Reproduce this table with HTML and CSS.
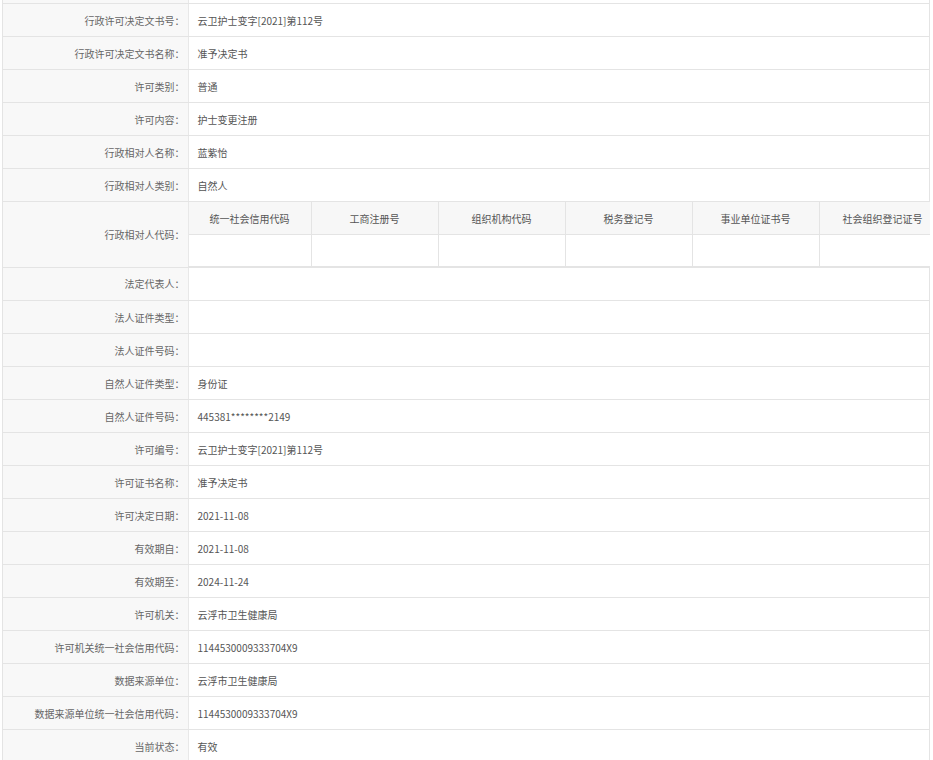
FILE: index.html
```html
<!DOCTYPE html>
<html lang="zh-CN">
<head>
<meta charset="utf-8">
<title>行政许可详情</title>
<link rel="stylesheet" href="styles.css">
</head>
<body>
<div class="wrap">
<table class="info">
<tr class="cut"><th></th><td></td></tr>
<tr><th>行政许可决定文书号：</th><td>云卫护士变字[2021]第112号</td></tr>
<tr><th>行政许可决定文书名称：</th><td>准予决定书</td></tr>
<tr><th>许可类别：</th><td>普通</td></tr>
<tr><th>许可内容：</th><td>护士变更注册</td></tr>
<tr><th>行政相对人名称：</th><td>蓝紫怡</td></tr>
<tr><th>行政相对人类别：</th><td>自然人</td></tr>
<tr class="coderow"><th>行政相对人代码：</th><td class="sub">
<div class="subclip">
<table class="codes">
<tr><th>统一社会信用代码</th><th>工商注册号</th><th>组织机构代码</th><th>税务登记号</th><th>事业单位证书号</th><th>社会组织登记证号</th></tr>
<tr><td></td><td></td><td></td><td></td><td></td><td></td></tr>
</table>
</div>
</td></tr>
<tr><th>法定代表人：</th><td></td></tr>
<tr><th>法人证件类型：</th><td></td></tr>
<tr><th>法人证件号码：</th><td></td></tr>
<tr><th>自然人证件类型：</th><td>身份证</td></tr>
<tr><th>自然人证件号码：</th><td>445381********2149</td></tr>
<tr><th>许可编号：</th><td>云卫护士变字[2021]第112号</td></tr>
<tr><th>许可证书名称：</th><td>准予决定书</td></tr>
<tr><th>许可决定日期：</th><td>2021-11-08</td></tr>
<tr><th>有效期自：</th><td>2021-11-08</td></tr>
<tr><th>有效期至：</th><td>2024-11-24</td></tr>
<tr><th>许可机关：</th><td>云浮市卫生健康局</td></tr>
<tr><th>许可机关统一社会信用代码：</th><td>1144530009333704X9</td></tr>
<tr><th>数据来源单位：</th><td>云浮市卫生健康局</td></tr>
<tr><th>数据来源单位统一社会信用代码：</th><td>1144530009333704X9</td></tr>
<tr><th>当前状态：</th><td>有效</td></tr>
</table>
</div>
</body>
</html>
```
FILE: styles.css
```css
html, body {
  margin: 0;
  padding: 0;
  background: #fff;
  overflow: hidden;
}
body {
  font-family: "Noto Sans CJK SC", "Liberation Sans", sans-serif;
  font-size: 10px;
  color: #555;
}
.wrap {
  margin-left: 2px;
  width: 928px;
  border-left: 1px solid #e4e4e4;
  border-right: 1px solid #e4e4e4;
  box-sizing: border-box;
}
.info {
  width: 100%;
  border-collapse: collapse;
  table-layout: fixed;
}
.info th,
.info td {
  height: 32px;
  padding: 0;
  border-bottom: 1px solid #e4e4e4;
  vertical-align: middle;
  font-weight: normal;
  white-space: nowrap;
}
.info > tbody > tr > th {
  background: #f8f8f8;
  text-align: right;
  padding-right: 3px;
  color: #666;
  border-right: 1px solid #e8e8e8;
  box-sizing: border-box;
  width: 185px;
}
.info > tbody > tr > td {
  padding-left: 9px;
  color: #555;
}
.info > tbody > tr.cut > th,
.info > tbody > tr.cut > td {
  height: 3px;
}
.info > tbody > tr.coderow > th {
  height: 65px;
}
.info > tbody > tr.coderow > td.sub {
  padding: 0;
  border-bottom: 2px solid #e4e4e4;
}
.subclip {
  overflow: hidden;
  width: 741px;
}
.codes {
  border-collapse: collapse;
  table-layout: fixed;
  width: 757px;
}
.codes th,
.codes td {
  width: 126px;
  border-right: 1px solid #e4e4e4;
  text-align: center;
  font-weight: normal;
  padding: 0;
}
.codes th:first-child,
.codes td:first-child {
  width: 122px;
}
.codes th {
  height: 32px;
  background: #f7f7f7;
  color: #555;
  border-bottom: 1px solid #e4e4e4;
}
.codes td {
  height: 31px;
  border-bottom: none;
  background: #fff;
}
```
